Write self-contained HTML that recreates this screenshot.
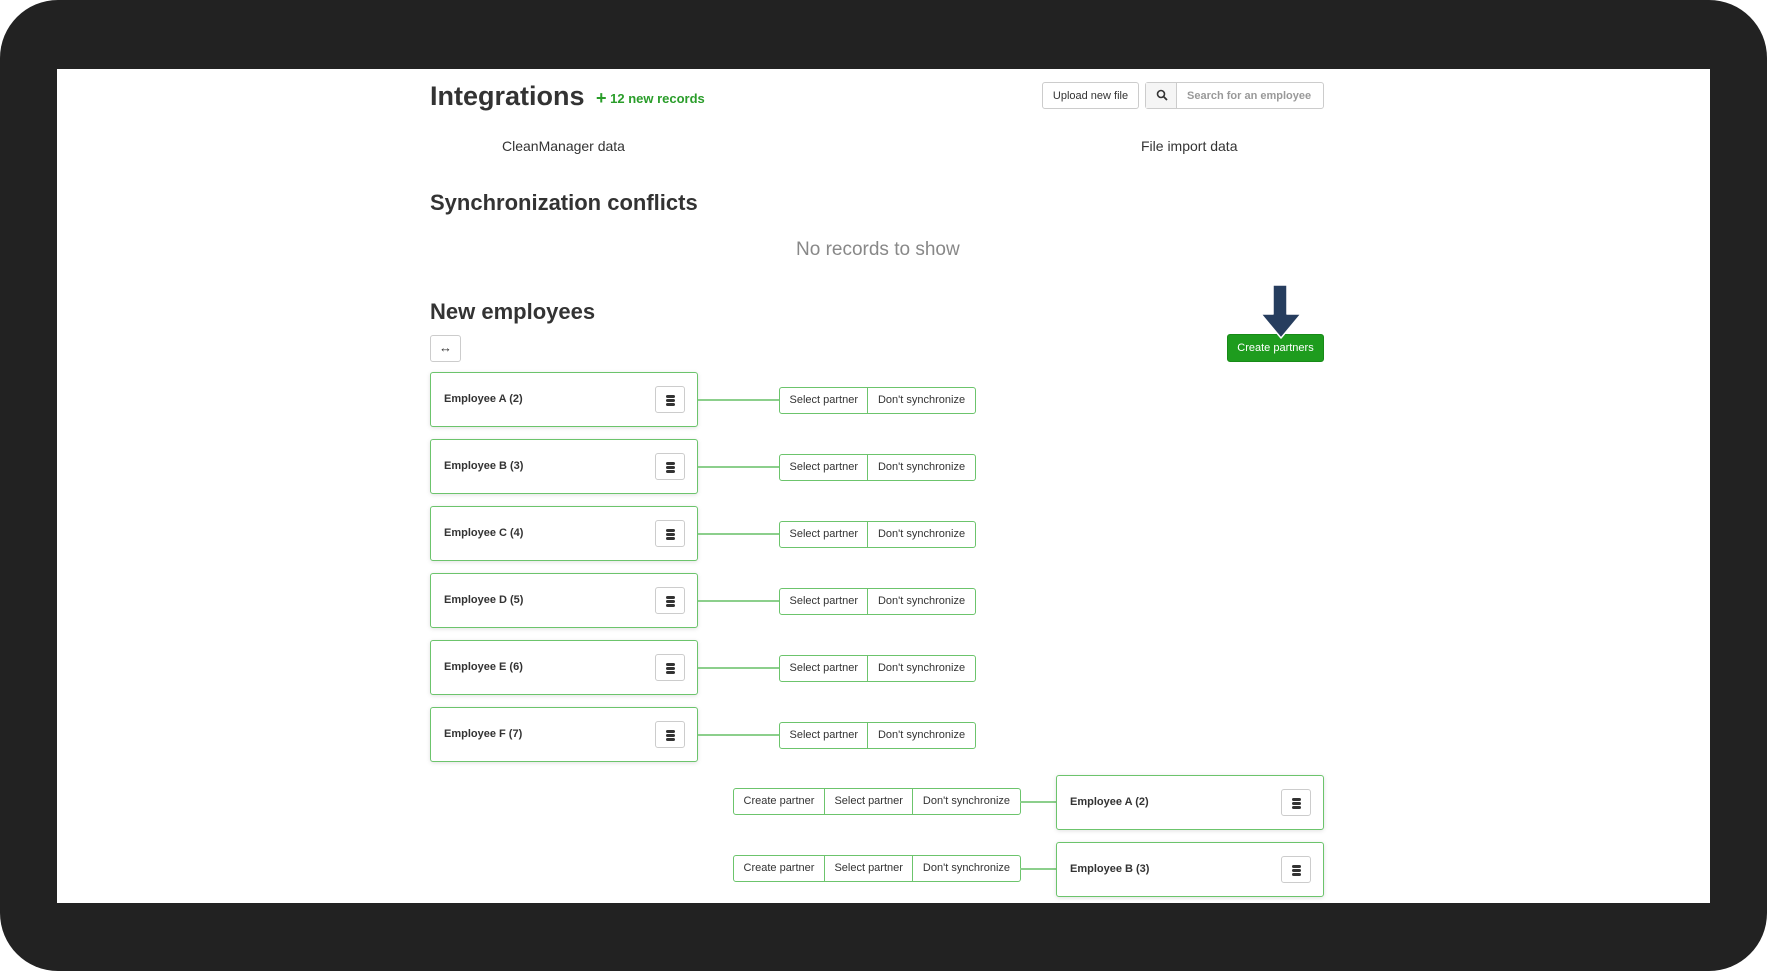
<!DOCTYPE html>
<html><head><meta charset="utf-8"><style>
*{box-sizing:border-box;margin:0;padding:0}
body{width:1767px;height:971px;background:#fff;font-family:"Liberation Sans",Arial,sans-serif;color:#333;position:relative;overflow:hidden}
.frame{position:absolute;left:0;top:0;width:1767px;height:971px;background:#222;border-radius:58px}
.white{position:absolute;left:57px;top:69px;width:1653px;height:834px;background:#fff}
.a{position:absolute;white-space:nowrap}
.box{position:absolute;width:268px;height:55px;border:1.5px solid #6cc46c;border-radius:3px;box-shadow:0 1px 4px rgba(0,0,0,.12);background:#fff}
.box .t{position:absolute;left:13px;top:20px;font-size:11px;font-weight:bold;color:#333}
.db{position:absolute;right:12px;top:13px;width:30px;height:27px;border:1px solid #ccc;border-radius:3px;background:#fff}
.db svg{position:absolute;left:10px;top:8px}
.line{position:absolute;height:2px;background:#8ccf8c}
.grp{position:absolute;height:27px;border:1.5px solid #6cc46c;border-radius:3px;display:flex;background:#fff}
.grp span{font-size:11px;color:#333;line-height:25px;padding:0 9.5px;border-left:1.5px solid #6cc46c}
.grp span:first-child{border-left:none}
</style></head><body>
<div class="frame"></div>
<div class="white"></div>
<div class="a" style="left:430px;top:81px;font-size:27px;font-weight:bold;color:#333">Integrations</div>
<div class="a" style="left:596px;top:87px;font-size:13px;font-weight:bold;color:#2a9d2a"><span style="font-size:18px;position:relative;top:1px">+</span> 12 new records</div>
<div class="a" style="left:1042px;top:82px;width:97px;height:27px;border:1px solid #ccc;border-radius:3px;font-size:11px;line-height:27px;text-align:center">Upload new file</div>
<div class="a" style="left:1145px;top:82px;width:179px;height:27px;border:1px solid #ccc;border-radius:3px;background:#fff">
<div style="position:absolute;left:0;top:0;width:31px;height:25px;background:#f5f5f5;border-right:1px solid #ccc"><svg width="12" height="12" viewBox="0 0 12 12" style="position:absolute;left:10px;top:6px"><circle cx="5" cy="5" r="3.5" fill="none" stroke="#333" stroke-width="1.6"/><path d="M7.5 7.5L11 11" stroke="#333" stroke-width="1.8"/></svg></div>
<div style="position:absolute;left:41px;top:1px;font-size:11px;line-height:25px;color:#999;font-weight:bold">Search for an employee</div></div>
<div class="a" style="left:502px;top:138px;font-size:14px">CleanManager data</div>
<div class="a" style="left:1141px;top:138px;font-size:14px">File import data</div>
<div class="a" style="left:430px;top:190px;font-size:22px;font-weight:bold">Synchronization conflicts</div>
<div class="a" style="left:796px;top:239px;font-size:19px;color:#888">No records to show</div>
<div class="a" style="left:430px;top:299px;font-size:22px;font-weight:bold">New employees</div>
<div class="a" style="left:430px;top:335px;width:31px;height:27px;border:1px solid #ccc;border-radius:3px;text-align:center;font-size:13px;line-height:24px">↔</div>
<div class="a" style="left:1227px;top:334px;width:97px;height:28px;background:#1e9c1e;border:1px solid #178a17;border-radius:3px;color:#fff;font-size:11px;line-height:26px;text-align:center">Create partners</div>
<svg class="a" style="left:1255px;top:283px" width="52" height="58" viewBox="0 0 52 58"><path d="M18 2h14v29h14l-20 24L6 31h12z" fill="#263d5e" stroke="#fff" stroke-width="1.5" stroke-linejoin="round"/></svg>

<div class="box" style="left:430px;top:372px"><div class="t">Employee A (2)</div><div class="db"><svg width="9" height="11"><rect x="0" y="0" width="9" height="3" rx="1.5" fill="#333"/><rect x="0" y="4" width="9" height="3" rx="1.5" fill="#333"/><rect x="0" y="8" width="9" height="3" rx="1.5" fill="#333"/></svg></div></div>
<div class="line" style="left:698px;top:399px;width:82px"></div>
<div class="grp" style="left:779px;top:387px"><span>Select partner</span><span>Don't synchronize</span></div>

<div class="box" style="left:430px;top:439px"><div class="t">Employee B (3)</div><div class="db"><svg width="9" height="11"><rect x="0" y="0" width="9" height="3" rx="1.5" fill="#333"/><rect x="0" y="4" width="9" height="3" rx="1.5" fill="#333"/><rect x="0" y="8" width="9" height="3" rx="1.5" fill="#333"/></svg></div></div>
<div class="line" style="left:698px;top:466px;width:82px"></div>
<div class="grp" style="left:779px;top:454px"><span>Select partner</span><span>Don't synchronize</span></div>

<div class="box" style="left:430px;top:506px"><div class="t">Employee C (4)</div><div class="db"><svg width="9" height="11"><rect x="0" y="0" width="9" height="3" rx="1.5" fill="#333"/><rect x="0" y="4" width="9" height="3" rx="1.5" fill="#333"/><rect x="0" y="8" width="9" height="3" rx="1.5" fill="#333"/></svg></div></div>
<div class="line" style="left:698px;top:533px;width:82px"></div>
<div class="grp" style="left:779px;top:521px"><span>Select partner</span><span>Don't synchronize</span></div>

<div class="box" style="left:430px;top:573px"><div class="t">Employee D (5)</div><div class="db"><svg width="9" height="11"><rect x="0" y="0" width="9" height="3" rx="1.5" fill="#333"/><rect x="0" y="4" width="9" height="3" rx="1.5" fill="#333"/><rect x="0" y="8" width="9" height="3" rx="1.5" fill="#333"/></svg></div></div>
<div class="line" style="left:698px;top:600px;width:82px"></div>
<div class="grp" style="left:779px;top:588px"><span>Select partner</span><span>Don't synchronize</span></div>

<div class="box" style="left:430px;top:640px"><div class="t">Employee E (6)</div><div class="db"><svg width="9" height="11"><rect x="0" y="0" width="9" height="3" rx="1.5" fill="#333"/><rect x="0" y="4" width="9" height="3" rx="1.5" fill="#333"/><rect x="0" y="8" width="9" height="3" rx="1.5" fill="#333"/></svg></div></div>
<div class="line" style="left:698px;top:667px;width:82px"></div>
<div class="grp" style="left:779px;top:655px"><span>Select partner</span><span>Don't synchronize</span></div>

<div class="box" style="left:430px;top:707px"><div class="t">Employee F (7)</div><div class="db"><svg width="9" height="11"><rect x="0" y="0" width="9" height="3" rx="1.5" fill="#333"/><rect x="0" y="4" width="9" height="3" rx="1.5" fill="#333"/><rect x="0" y="8" width="9" height="3" rx="1.5" fill="#333"/></svg></div></div>
<div class="line" style="left:698px;top:734px;width:82px"></div>
<div class="grp" style="left:779px;top:722px"><span>Select partner</span><span>Don't synchronize</span></div>

<div class="grp" style="left:733px;top:788px"><span>Create partner</span><span>Select partner</span><span>Don't synchronize</span></div>
<div class="line" style="left:1020px;top:801px;width:37px"></div>
<div class="box" style="left:1056px;top:775px;width:268px"><div class="t">Employee A (2)</div><div class="db"><svg width="9" height="11"><rect x="0" y="0" width="9" height="3" rx="1.5" fill="#333"/><rect x="0" y="4" width="9" height="3" rx="1.5" fill="#333"/><rect x="0" y="8" width="9" height="3" rx="1.5" fill="#333"/></svg></div></div>
<div class="grp" style="left:733px;top:855px"><span>Create partner</span><span>Select partner</span><span>Don't synchronize</span></div>
<div class="line" style="left:1020px;top:868px;width:37px"></div>
<div class="box" style="left:1056px;top:842px;width:268px"><div class="t">Employee B (3)</div><div class="db"><svg width="9" height="11"><rect x="0" y="0" width="9" height="3" rx="1.5" fill="#333"/><rect x="0" y="4" width="9" height="3" rx="1.5" fill="#333"/><rect x="0" y="8" width="9" height="3" rx="1.5" fill="#333"/></svg></div></div>
</body></html>
